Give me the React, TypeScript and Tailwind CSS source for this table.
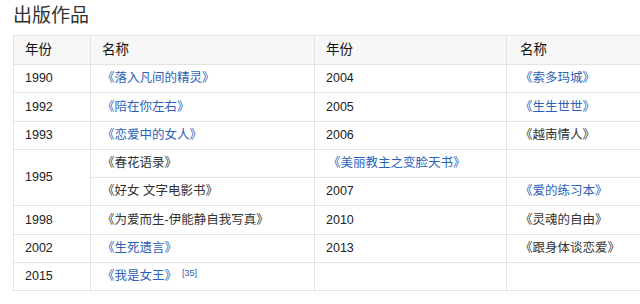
type Cell = { text?: string; link?: boolean; sup?: string };

const font = { fontFamily: '"Liberation Sans", "Noto Sans CJK SC", sans-serif' };

function Name({ c }: { c: Cell }) {
  if (!c.text) return null;
  return (
    <span className={c.link ? "text-[#2b62b9]" : "text-[#333]"}>
      {c.text}
      {c.sup && <sup className="ml-[5px] text-[9px] text-[#2b62b9]">{c.sup}</sup>}
    </span>
  );
}

const td = "border border-[#e3e3e3] px-[11px] align-middle";

export default function App() {
  return (
    <div className="w-[640px] h-[304px] overflow-hidden bg-white" style={font}>
      <h2 className="pl-[13px] pt-[4px] text-[19px] leading-[24px] text-[#333]">出版作品</h2>
      <div className="pl-[13px] pt-[7px]">
        <table className="w-[720px] table-fixed border-collapse text-[12.5px] text-[#222]">
          <colgroup>
            <col className="w-[77px]" />
            <col className="w-[224px]" />
            <col className="w-[192px]" />
            <col />
          </colgroup>
          <thead>
            <tr className="h-[29px] bg-[#f7f7f7] text-left text-[13.5px]">
              <th className={td + " font-normal text-[#111]"}>年份</th>
              <th className={td + " font-normal text-[#111]"}>名称</th>
              <th className={td + " font-normal text-[#111]"}>年份</th>
              <th className={td + " font-normal text-[#111] pl-[13px]"}>名称</th>
            </tr>
          </thead>
          <tbody>
            <tr className="h-[28.25px]">
              <td className={td}>1990</td>
              <td className={td}><Name c={{ text: "《落入凡间的精灵》", link: true }} /></td>
              <td className={td}>2004</td>
              <td className={td + " pl-[13px]"}><Name c={{ text: "《索多玛城》", link: true }} /></td>
            </tr>
            <tr className="h-[28.25px]">
              <td className={td}>1992</td>
              <td className={td}><Name c={{ text: "《陪在你左右》", link: true }} /></td>
              <td className={td}>2005</td>
              <td className={td + " pl-[13px]"}><Name c={{ text: "《生生世世》", link: true }} /></td>
            </tr>
            <tr className="h-[28.25px]">
              <td className={td}>1993</td>
              <td className={td}><Name c={{ text: "《恋爱中的女人》", link: true }} /></td>
              <td className={td}>2006</td>
              <td className={td + " pl-[13px]"}><Name c={{ text: "《越南情人》" }} /></td>
            </tr>
            <tr className="h-[28.25px]">
              <td className={td} rowSpan={2}>1995</td>
              <td className={td}><Name c={{ text: "《春花语录》" }} /></td>
              <td className={td + " pl-[13px]"}><Name c={{ text: "《美丽教主之变脸天书》", link: true }} /></td>
              <td className={td}></td>
            </tr>
            <tr className="h-[28.25px]">
              <td className={td}><Name c={{ text: "《好女 文字电影书》" }} /></td>
              <td className={td}>2007</td>
              <td className={td + " pl-[13px]"}><Name c={{ text: "《爱的练习本》", link: true }} /></td>
            </tr>
            <tr className="h-[28.25px]">
              <td className={td}>1998</td>
              <td className={td}><Name c={{ text: "《为爱而生-伊能静自我写真》" }} /></td>
              <td className={td}>2010</td>
              <td className={td + " pl-[13px]"}><Name c={{ text: "《灵魂的自由》" }} /></td>
            </tr>
            <tr className="h-[28.25px]">
              <td className={td}>2002</td>
              <td className={td}><Name c={{ text: "《生死遗言》", link: true }} /></td>
              <td className={td}>2013</td>
              <td className={td + " pl-[13px]"}><Name c={{ text: "《跟身体谈恋爱》" }} /></td>
            </tr>
            <tr className="h-[28.25px]">
              <td className={td}>2015</td>
              <td className={td}><Name c={{ text: "《我是女王》", link: true, sup: "[35]" }} /></td>
              <td className={td}></td>
              <td className={td}></td>
            </tr>
          </tbody>
        </table>
      </div>
    </div>
  );
}
